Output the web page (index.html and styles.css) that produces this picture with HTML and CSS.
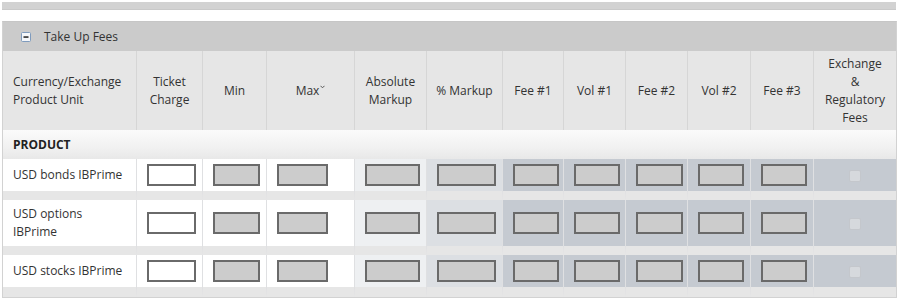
FILE: index.html
```html
<!DOCTYPE html>
<html>
<head>
<meta charset="utf-8">
<link rel="stylesheet" href="styles.css">
</head>
<body>
<div class="page">
  <div class="topbar"></div>
  <div class="panel">
    <div class="panel-head">
      <svg class="toggle" width="10" height="10" viewBox="0 0 10 10">
        <rect x="0.5" y="0.5" width="9" height="9" rx="1" fill="#f4f6f9" stroke="#7f9bbd"/>
        <rect x="2.5" y="4.3" width="5" height="1.5" fill="#1e1e1e"/>
      </svg>
      <span class="title">Take Up Fees</span>
    </div>
    <table class="fees">
      <colgroup>
        <col class="w-prod"><col class="w-ticket"><col class="w-min"><col class="w-max"><col class="w-abs"><col class="w-pct">
        <col class="w-fee1"><col class="w-vol1"><col class="w-fee2"><col class="w-vol2"><col class="w-fee3"><col class="w-exch">
      </colgroup>
      <thead>
        <tr>
          <th class="first">Currency/Exchange<br>Product Unit</th>
          <th>Ticket<br>Charge</th>
          <th>Min</th>
          <th>Max<svg class="caret" width="5" height="4" viewBox="0 0 5 4"><polyline points="0.5,0.8 2.5,2.8 4.5,0.8" fill="none" stroke="#555" stroke-width="1"/></svg></th>
          <th>Absolute<br>Markup</th>
          <th>% Markup</th>
          <th>Fee #1</th>
          <th>Vol #1</th>
          <th>Fee #2</th>
          <th>Vol #2</th>
          <th>Fee #3</th>
          <th class="last">Exchange<br>&amp;<br>Regulatory<br>Fees</th>
        </tr>
      </thead>
      <tbody>
        <tr class="section"><td colspan="12">PRODUCT</td></tr>
        <tr class="row">
          <td class="name">USD bonds IBPrime</td>
          <td><input class="box box-ticket" type="text"></td>
          <td><input class="box box-min" type="text" disabled></td>
          <td><input class="box box-max" type="text" disabled></td>
          <td class="abs"><input class="box box-abs" type="text" disabled></td>
          <td class="pct"><input class="box box-pct" type="text" disabled></td>
          <td class="dk"><input class="box box-fee1" type="text" disabled></td>
          <td class="dk"><input class="box box-vol1" type="text" disabled></td>
          <td class="dk"><input class="box box-fee2" type="text" disabled></td>
          <td class="dk"><input class="box box-vol2" type="text" disabled></td>
          <td class="dk"><input class="box box-fee3" type="text" disabled></td>
          <td class="dk chk"><input class="check" type="checkbox" disabled></td>
        </tr>
        <tr class="row">
          <td class="name">USD options<br>IBPrime</td>
          <td><input class="box box-ticket" type="text"></td>
          <td><input class="box box-min" type="text" disabled></td>
          <td><input class="box box-max" type="text" disabled></td>
          <td class="abs"><input class="box box-abs" type="text" disabled></td>
          <td class="pct"><input class="box box-pct" type="text" disabled></td>
          <td class="dk"><input class="box box-fee1" type="text" disabled></td>
          <td class="dk"><input class="box box-vol1" type="text" disabled></td>
          <td class="dk"><input class="box box-fee2" type="text" disabled></td>
          <td class="dk"><input class="box box-vol2" type="text" disabled></td>
          <td class="dk"><input class="box box-fee3" type="text" disabled></td>
          <td class="dk chk"><input class="check" type="checkbox" disabled></td>
        </tr>
        <tr class="row">
          <td class="name">USD stocks IBPrime</td>
          <td><input class="box box-ticket" type="text"></td>
          <td><input class="box box-min" type="text" disabled></td>
          <td><input class="box box-max" type="text" disabled></td>
          <td class="abs"><input class="box box-abs" type="text" disabled></td>
          <td class="pct"><input class="box box-pct" type="text" disabled></td>
          <td class="dk"><input class="box box-fee1" type="text" disabled></td>
          <td class="dk"><input class="box box-vol1" type="text" disabled></td>
          <td class="dk"><input class="box box-fee2" type="text" disabled></td>
          <td class="dk"><input class="box box-vol2" type="text" disabled></td>
          <td class="dk"><input class="box box-fee3" type="text" disabled></td>
          <td class="dk chk"><input class="check" type="checkbox" disabled></td>
        </tr>
      </tbody>
    </table>
  </div>
</div>
</body>
</html>
```

FILE: styles.css
```css
* { box-sizing: border-box; }
html, body { margin: 0; padding: 0; background: #ffffff; }
body {
  font-family: "Open Sans", "Noto Sans", sans-serif;
  font-size: 12px;
  color: #333333;
}
.page { padding: 2px 3px 0 2px; width: 899px; }
.topbar {
  height: 8px;
  width: 894px;
  background: #d2d2d2;
  border-bottom: 1px solid #c9c9c9;
  margin-bottom: 11px;
}
.panel {
  width: 895px;
  border: 1px solid #d2d2d2;
  border-top-color: #c6c6c6;
}
.panel-head {
  height: 29px;
  background: #cbcbcb;
  display: flex;
  align-items: center;
  padding-left: 18px;
}
.toggle { display: block; margin-top: 1px; }
.title { margin-left: 13px; font-size: 12px; color: #333; }

.fees {
  width: 893px;
  table-layout: fixed;
  border-collapse: separate;
  border-spacing: 0;
}
.w-prod { width: 134px; }
.w-ticket { width: 66px; }
.w-min { width: 64px; }
.w-max { width: 88px; }
.w-abs { width: 72px; }
.w-pct { width: 76px; }
.w-fee1 { width: 61px; }
.w-vol1 { width: 62px; }
.w-fee2 { width: 62px; }
.w-vol2 { width: 63px; }
.w-fee3 { width: 63px; }
.w-exch { width: 82px; }

.fees th {
  background: #e6e6e6;
  font-weight: normal;
  line-height: 18px;
  height: 79px;
  padding: 0 4px;
  text-align: center;
  vertical-align: middle;
  border-right: 1px solid #d6d6d6;
  color: #333;
}
.fees th.first { text-align: left; padding-left: 10px; }
.fees th.last { border-right: none; }
.caret { vertical-align: top; margin-top: 3px; margin-left: 1px; }

.section td {
  height: 29px;
  padding: 0 10px;
  font-weight: bold;
  color: #222;
  background: linear-gradient(to bottom, #fbfbfb 0%, #f1f1f1 60%, #e8e8e8 100%);
}

.row td {
  background: #ffffff;
  padding: 5px 0 5px 10px;
  line-height: 18px;
  vertical-align: middle;
  border-right: 1px solid #dfe0e2;
  border-bottom: 9px solid #e6e6e6;
}
.row:last-child td { border-bottom-width: 10px; }
.row td.abs { background: #eef0f2; }
.row td.pct { background: #dcdfe3; }
.row td.dk { background: #c5cad1; }
.row td.chk { border-right: none; text-align: center; padding-left: 0; }

.box {
  display: block;
  height: 22px;
  margin: 0;
  padding: 0;
  border: 2px solid #6a6a6a;
  border-radius: 0;
  background: #cccccc;
  font: inherit;
  outline: none;
}
.box-ticket { background: #ffffff; width: 49px; }
.box-min { width: 47px; }
.box-max { width: 51px; }
.box-abs { width: 55px; }
.box-pct { width: 59px; }
.box-fee1 { width: 46px; }
.box-vol1 { width: 46px; }
.box-fee2 { width: 47px; }
.box-vol2 { width: 46px; }
.box-fee3 { width: 46px; }

.check {
  appearance: none;
  -webkit-appearance: none;
  display: inline-block;
  width: 12px;
  height: 12px;
  margin: 0;
  vertical-align: middle;
  border: 1px solid #c4c7cc;
  border-radius: 2px;
  background: #d6d9dd;
}
```
